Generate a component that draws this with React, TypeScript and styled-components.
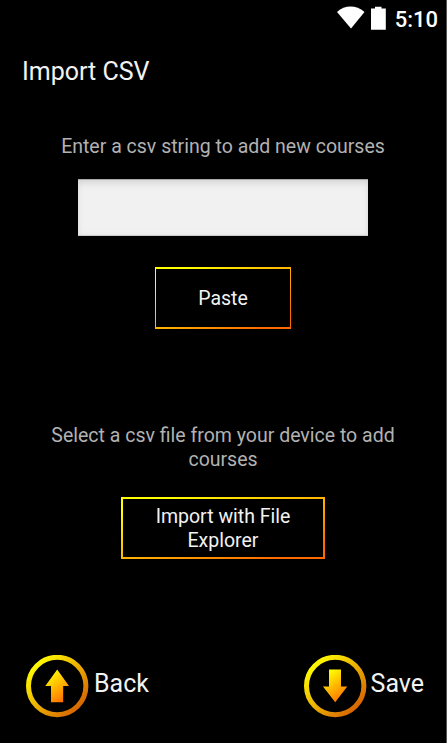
import React from "react";
import styled, { createGlobalStyle } from "styled-components";

const GlobalStyle = createGlobalStyle`
  * { box-sizing: border-box; }
  body { margin: 0; background: #000; }
`;

const Screen = styled.main`
  width: 447px;
  height: 743px;
  display: flex;
  flex-direction: column;
  background: #000;
  border-right: 1px solid #555;
  color: #f2f2f2;
  font-family: Roboto, sans-serif;
  overflow: hidden;
`;

const StatusBar = styled.header`
  height: 40px;
  display: flex;
  justify-content: flex-end;
  padding-right: 8px;
`;

const StatusIcons = styled.svg`
  width: 52px;
  height: 30px;
  margin-top: 3px;
  margin-right: 6px;
`;

const Clock = styled.time`
  font-size: 22px;
  font-weight: 500;
  line-height: 26px;
  margin-top: 7px;
  color: #fff;
`;

const Title = styled.h1`
  margin: 16px 0 0 22px;
  font-size: 25px;
  line-height: 32px;
  font-weight: 400;
`;

const Section = styled.section<{ $height: number; $top?: number }>`
  height: ${(p) => p.$height}px;
  margin-top: ${(p) => p.$top ?? 0}px;
  display: flex;
  flex-direction: column;
  align-items: center;
`;

const Hint = styled.p`
  width: 360px;
  margin: 0;
  text-align: center;
  font-size: 19.5px;
  line-height: 24px;
  color: #b2b2b2;
`;

const CsvField = styled.input`
  width: 290px;
  height: 57px;
  margin: 20px 0 31px;
  padding: 0 12px;
  border: 0;
  border-top: 1px solid #aaa;
  border-bottom: 1px solid #ccc;
  border-radius: 0;
  background: #f1f1f1;
  box-shadow: inset 0 5px 8px -3px #d0d0d0, inset 0 0 5px #e2e2e2;
  outline: 0;
`;

const GradientButton = styled.button<{ $width: number; $edge: number; $top?: number }>`
  width: ${(p) => p.$width}px;
  height: 62px;
  margin-top: ${(p) => p.$top ?? 0}px;
  padding: 1px 20px 0;
  border: solid transparent;
  border-width: 2px ${(p) => p.$edge}px;
  border-image: linear-gradient(to bottom right, #ffff00 12%, #ff6a00 88%) 2 ${(p) => p.$edge};
  background: #000;
  color: #f2f2f2;
  font-family: inherit;
  font-size: 19.5px;
  line-height: 24px;
`;

const Footer = styled.footer`
  display: flex;
  justify-content: space-between;
  padding: 0 22px 0 26px;
`;

const Action = styled.button<{ $gap: number }>`
  display: flex;
  gap: ${(p) => p.$gap}px;
  padding: 0;
  border: 0;
  background: none;
  color: #f2f2f2;
  font-family: inherit;
  font-size: 25px;
  line-height: 30px;
`;

const ActionLabel = styled.span`
  margin-top: 14px;
`;

const Ring = styled.svg`
  width: 63px;
  height: 63px;
`;

function ArrowRing({ down = false }: { down?: boolean }) {
  const id = down ? "down" : "up";
  return (
    <Ring viewBox="0 0 63 63">
      <defs>
        <linearGradient id={`ring-${id}`} x1="10" y1="10" x2="53" y2="53" gradientUnits="userSpaceOnUse">
          <stop stopColor="#fff800" />
          <stop offset="1" stopColor="#d86600" />
        </linearGradient>
        <linearGradient id={`arrow-${id}`} x1="22" y1="18" x2="40" y2="44" gradientUnits="userSpaceOnUse">
          <stop stopColor="#ffff00" />
          <stop offset="1" stopColor="#ff7000" />
        </linearGradient>
      </defs>
      <circle cx="31.2" cy="31" r="28.7" fill="none" stroke={`url(#ring-${id})`} strokeWidth="5" />
      <path
        d={down ? "M25 14.5H37V31.5H43.3L31.2 47.2L19 31.5H25Z" : "M31.2 14.5L43 31H37.2V47.2H25V31H19.3Z"}
        fill={`url(#arrow-${id})`}
      />
    </Ring>
  );
}

export default function App() {
  return (
    <>
      <GlobalStyle />
      <Screen>
        <StatusBar>
          <StatusIcons viewBox="0 0 52 30" fill="#fff">
            <path d="M0 9C8 1.8 19 1.8 27.5 9L14 25.5Z" />
            <path d="M38 3.8H44.5V5.5H48.8V26.7H34V5.5H38Z" />
          </StatusIcons>
          <Clock>5:10</Clock>
        </StatusBar>
        <Title>Import CSV</Title>
        <Section $height={288} $top={47}>
          <Hint>Enter a csv string to add new courses</Hint>
          <CsvField aria-label="CSV string" />
          <GradientButton $width={136} $edge={1}>Paste</GradientButton>
        </Section>
        <Section $height={231} $top={1}>
          <Hint>Select a csv file from your device to add courses</Hint>
          <GradientButton $width={204} $edge={2} $top={25}>
            Import with File<br />Explorer
          </GradientButton>
        </Section>
        <Footer>
          <Action $gap={5}>
            <ArrowRing />
            <ActionLabel>Back</ActionLabel>
          </Action>
          <Action $gap={4}>
            <ArrowRing down />
            <ActionLabel>Save</ActionLabel>
          </Action>
        </Footer>
      </Screen>
    </>
  );
}
